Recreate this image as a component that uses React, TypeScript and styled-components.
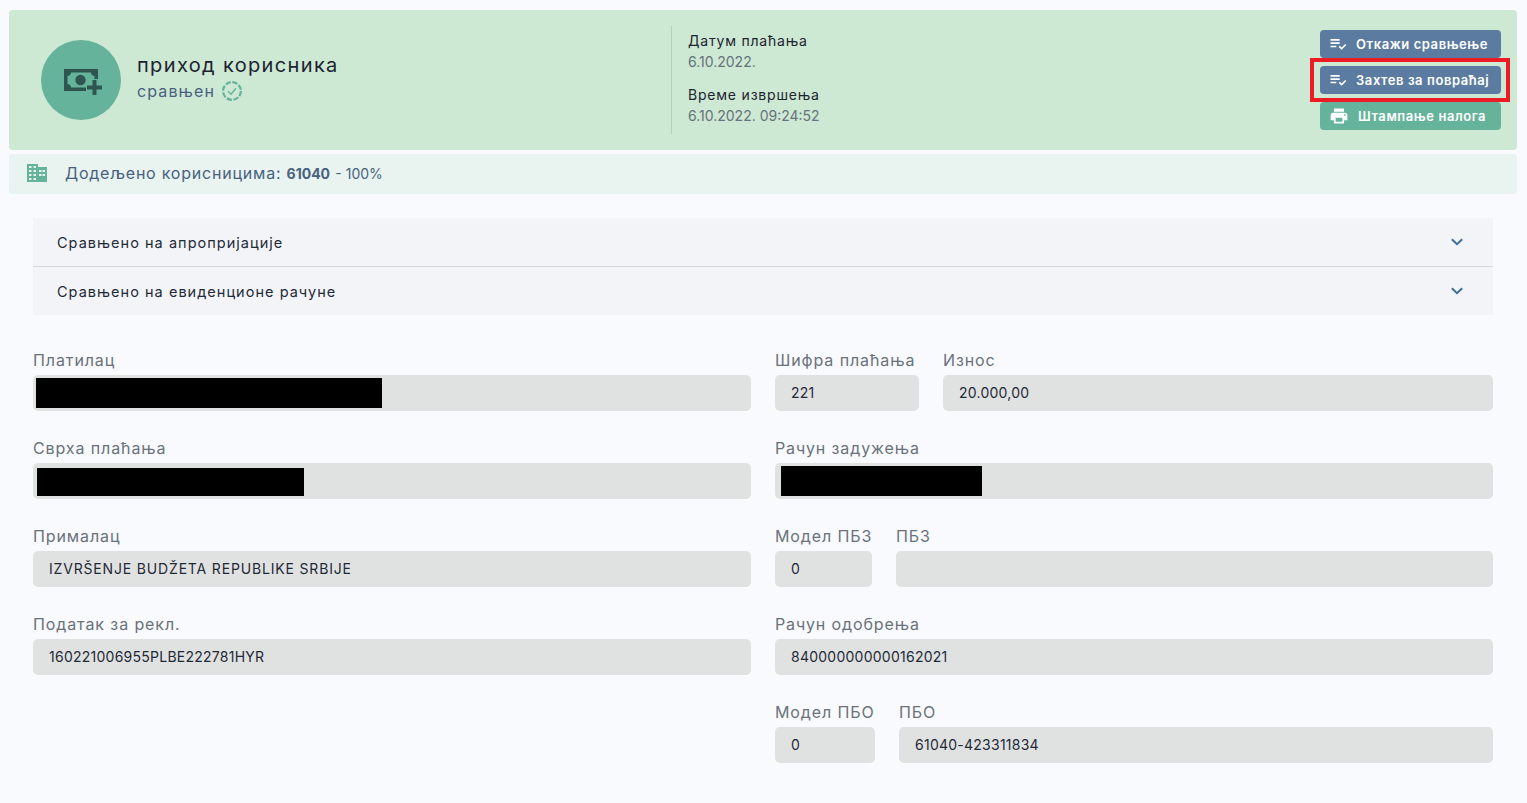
import React from "react";
import styled, { createGlobalStyle } from "styled-components";
import { MdPlaylistAddCheck, MdPrint } from "react-icons/md";

const Global = createGlobalStyle`
  html, body { margin: 0; padding: 0; background: #f9fafd; }
  body { font-family: "Inter", "Noto Sans", sans-serif; color: #1f2a37; }
  * { box-sizing: border-box; }
`;

const Page = styled.div`
  width: 1527px;
  height: 803px;
  padding: 10px 10px 0 9px;
  overflow: hidden;
`;

const Header = styled.header`
  height: 140px;
  background: #cde8d3;
  border-radius: 4px;
  display: flex;
  align-items: stretch;
  position: relative;
`;

const Identity = styled.div`
  width: 662px;
  padding-left: 32px;
  display: flex;
  align-items: flex-start;
  padding-top: 30px;
  gap: 16px;
`;

const Avatar = styled.div`
  width: 80px;
  height: 80px;
  border-radius: 50%;
  background: #66b39b;
  display: flex;
  align-items: center;
  justify-content: center;
`;

const MoneySvg = styled.svg`
  margin: 4px 0 0 4px;
`;

const TitleBlock = styled.div`
  padding-top: 13px;
  display: flex;
  flex-direction: column;
`;

const Title = styled.div`
  font-size: 20px;
  line-height: 24px;
  letter-spacing: 1.35px;
  color: #1c2430;
`;

const Status = styled.div`
  margin-top: 3px;
  display: flex;
  align-items: center;
  gap: 7px;
  font-size: 16px;
  line-height: 22px;
  letter-spacing: 1.1px;
  color: #48617f;
`;

const Meta = styled.div`
  width: 649px;
  margin: 16px 0;
  border-left: 1px solid #b5cfbc;
  padding: 4px 0 0 16px;
  display: flex;
  flex-direction: column;
  gap: 12px;
`;

const MetaItem = styled.div`
  display: flex;
  flex-direction: column;
`;

const MetaLabel = styled.span`
  font-size: 14px;
  line-height: 21px;
  letter-spacing: 0.8px;
  color: #1c2430;
`;

const MetaValue = styled.span`
  font-size: 14px;
  line-height: 21px;
  color: #66737a;
`;

const Actions = styled.div`
  width: 181px;
  padding-top: 20px;
  display: flex;
  flex-direction: column;
  gap: 8px;
`;

const ActionButton = styled.button<{ $tone: "blue" | "green" }>`
  height: 28px;
  width: 181px;
  border: 0;
  border-radius: 4px;
  padding: 0 0 0 8px;
  display: flex;
  align-items: center;
  gap: 8px;
  font-family: inherit;
  font-size: 13px;
  font-weight: 600;
  letter-spacing: 0.57px;
  white-space: nowrap;
  color: #fff;
  background: ${(p) => (p.$tone === "blue" ? "#5b7ca0" : "#66b39b")};
`;

const ListIcon = styled(MdPlaylistAddCheck)`
  flex: none;
  width: 20px;
  height: 20px;
`;

const PrinterIcon = styled(MdPrint)`
  flex: none;
  width: 20px;
  height: 20px;
  margin: 0 1px;
`;

const Highlight = styled.div`
  position: absolute;
  left: 1301px;
  top: 48px;
  width: 200px;
  height: 44px;
  border: 4px solid #ed1c24;
  pointer-events: none;
`;

const InfoBar = styled.div`
  margin-top: 4px;
  height: 40px;
  background: #e9f3ef;
  border-radius: 4px;
  padding: 0 0 2px 18px;
  display: flex;
  align-items: center;
  gap: 18px;
  font-size: 16px;
  letter-spacing: 0.78px;
  color: #48617f;
`;

const Strong = styled.b`
  font-size: 14px;
  font-weight: 700;
  letter-spacing: 0;
`;

const Percent = styled.span`
  font-size: 14px;
  letter-spacing: 0;
`;

const Content = styled.main`
  padding: 24px 24px 0 24px;
`;

const Accordion = styled.section`
  background: #f3f4f8;
  margin-bottom: 24px;
`;

const AccordionRow = styled.div<{ $last?: boolean }>`
  height: ${(p) => (p.$last ? "48px" : "49px")};
  padding: 0 30px 0 24px;
  display: flex;
  align-items: center;
  justify-content: space-between;
  font-size: 14.5px;
  letter-spacing: 1.03px;
  color: #1f2a37;
  border-bottom: ${(p) => (p.$last ? "0" : "1px solid #d6d8de")};
`;

const Columns = styled.div`
  display: grid;
  grid-template-columns: 718px 718px;
  column-gap: 24px;
`;

const Column = styled.div`
  display: flex;
  flex-direction: column;
`;

const Row = styled.div<{ $first: number }>`
  display: grid;
  grid-template-columns: ${(p) => p.$first}px 1fr;
  column-gap: 24px;
`;

const Field = styled.div`
  height: 88px;
  padding-top: 11px;
  min-width: 0;
`;

const Label = styled.label`
  display: block;
  font-size: 16px;
  line-height: 20px;
  letter-spacing: 0.9px;
  color: #69727a;
  white-space: nowrap;
`;

const Value = styled.div<{ $wide?: boolean }>`
  margin-top: 5px;
  height: 36px;
  border-radius: 5px;
  background: #e0e1e1;
  padding: 0 16px 2px;
  display: flex;
  align-items: center;
  font-size: 14px;
  letter-spacing: ${(p) => (p.$wide ? "0.83px" : "0.25px")};
  color: #1f2a37;
  position: relative;
`;

const Redaction = styled.div<{ $l: number; $t: number; $w: number; $h: number }>`
  position: absolute;
  left: ${(p) => p.$l}px;
  top: ${(p) => p.$t}px;
  width: ${(p) => p.$w}px;
  height: ${(p) => p.$h}px;
  background: #000;
`;

const MoneyIcon = () => (
  <MoneySvg width="38" height="26" viewBox="0 0 38 26">
    <rect x="0" y="0" width="34" height="22" fill="#2f5550" />
    <path
      d="M7 3.500h20c0 2 1.500 3.500 3.500 3.500v8c-2 0-3.500 1.500-3.500 3.500H7c0-2-1.500-3.500-3.500-3.500V7c2 0 3.500-1.500 3.500-3.500z"
      fill="#66b39b"
    />
    <circle cx="16.500" cy="11" r="5.200" fill="#2f5550" />
    <rect x="22" y="10" width="16" height="16" fill="#66b39b" />
    <path d="M28.500 11h4v5.500H38v4h-5.500V26h-4v-5.500H23v-4h5.500z" fill="#2f5550" />
  </MoneySvg>
);

const VerifiedIcon = () => (
  <svg width="20" height="20" viewBox="0 0 20 20" fill="none" stroke="#66b39b" strokeWidth="2.200">
    <circle cx="10" cy="10" r="8.900" strokeDasharray="5.400 1.590" />
    <path d="M6 10.200l3 3 5-6" strokeWidth="1.400" />
  </svg>
);

const BuildingIcon = () => (
  <svg width="20" height="18" viewBox="0 0 20 18">
    <path
      fill="#66b39b"
      fillRule="evenodd"
      d="M0 0h11v3h9v15H0zM2 2v2h2.500V2zm4.500 0v2H9V2zM2 6v2h2.500V6zm4.500 0v2H9V6zM2 10v2h2.500v-2zm4.500 0v2H9v-2zM2 14v2h2.500v-2zm4.500 0v2H9v-2zM12 6v2h2.500V6zm3.500 0v2H18V6zM12 10v2h2.500v-2zm3.500 0v2H18v-2z"
    />
  </svg>
);

const Chevron = () => (
  <svg width="12" height="8" viewBox="0 0 12 8" fill="none" stroke="#3f6d9a" strokeWidth="2">
    <path d="M0.800 1.200L6 6.200l5.200-5" />
  </svg>
);

export default function App() {
  return (
    <Page>
      <Global />
      <Header>
        <Identity>
          <Avatar>
            <MoneyIcon />
          </Avatar>
          <TitleBlock>
            <Title>приход корисника</Title>
            <Status>
              сравњен <VerifiedIcon />
            </Status>
          </TitleBlock>
        </Identity>
        <Meta>
          <MetaItem>
            <MetaLabel>Датум плаћања</MetaLabel>
            <MetaValue>6.10.2022.</MetaValue>
          </MetaItem>
          <MetaItem>
            <MetaLabel>Време извршења</MetaLabel>
            <MetaValue>6.10.2022. 09:24:52</MetaValue>
          </MetaItem>
        </Meta>
        <Actions>
          <ActionButton $tone="blue">
            <ListIcon />
            Откажи сравњење
          </ActionButton>
          <ActionButton $tone="blue">
            <ListIcon />
            Захтев за повраћај
          </ActionButton>
          <ActionButton $tone="green">
            <PrinterIcon />
            Штампање налога
          </ActionButton>
        </Actions>
        <Highlight />
      </Header>
      <InfoBar>
        <BuildingIcon />
        <span>
          Додељено корисницима: <Strong>61040</Strong> <Percent>- 100%</Percent>
        </span>
      </InfoBar>
      <Content>
        <Accordion>
          <AccordionRow>
            Сравњено на апропријације
            <Chevron />
          </AccordionRow>
          <AccordionRow $last>
            Сравњено на евиденционе рачуне
            <Chevron />
          </AccordionRow>
        </Accordion>
        <Columns>
          <Column>
            <Field>
              <Label>Платилац</Label>
              <Value>
                <Redaction $l={3} $t={3} $w={346} $h={30} />
              </Value>
            </Field>
            <Field>
              <Label>Сврха плаћања</Label>
              <Value>
                <Redaction $l={4} $t={5} $w={267} $h={28} />
              </Value>
            </Field>
            <Field>
              <Label>Прималац</Label>
              <Value $wide>IZVRŠENJE BUDŽETA REPUBLIKE SRBIJE</Value>
            </Field>
            <Field>
              <Label>Податак за рекл.</Label>
              <Value>160221006955PLBE222781HYR</Value>
            </Field>
          </Column>
          <Column>
            <Row $first={144}>
              <Field>
                <Label>Шифра плаћања</Label>
                <Value>221</Value>
              </Field>
              <Field>
                <Label>Износ</Label>
                <Value>20.000,00</Value>
              </Field>
            </Row>
            <Field>
              <Label>Рачун задужења</Label>
              <Value>
                <Redaction $l={6} $t={3} $w={201} $h={30} />
              </Value>
            </Field>
            <Row $first={97}>
              <Field>
                <Label>Модел ПБЗ</Label>
                <Value>0</Value>
              </Field>
              <Field>
                <Label>ПБЗ</Label>
                <Value />
              </Field>
            </Row>
            <Field>
              <Label>Рачун одобрења</Label>
              <Value>840000000000162021</Value>
            </Field>
            <Row $first={100}>
              <Field>
                <Label>Модел ПБО</Label>
                <Value>0</Value>
              </Field>
              <Field>
                <Label>ПБО</Label>
                <Value>61040-423311834</Value>
              </Field>
            </Row>
          </Column>
        </Columns>
      </Content>
    </Page>
  );
}
